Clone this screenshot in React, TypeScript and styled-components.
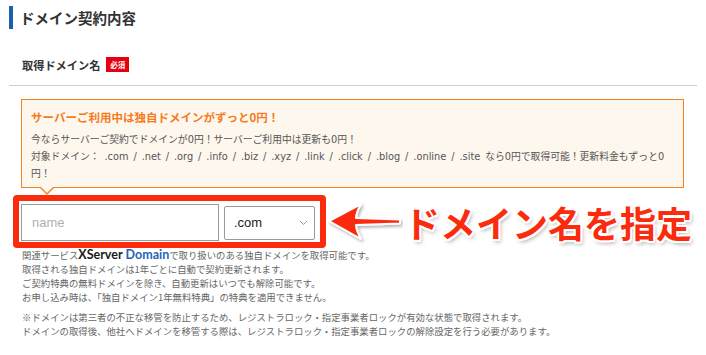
import React from 'react'
import styled, { createGlobalStyle } from 'styled-components'

const GlobalStyle = createGlobalStyle`
  html, body {
    margin: 0;
    padding: 0;
    background: #fff;
  }
  body {
    font-family: "Noto Sans CJK JP", "Noto Sans", sans-serif;
    color: #333;
  }
`

const Page = styled.div`
  width: 706px;
  height: 355px;
  overflow: hidden;
  padding-top: 6px;
  box-sizing: border-box;
`

const Title = styled.h2`
  margin: 0 0 0 9px;
  height: 23px;
  line-height: 23px;
  border-left: 4px solid #1c5fad;
  padding-left: 7px;
  font-size: 14.5px;
  font-weight: 700;
  color: #333;
`

const FieldSection = styled.div`
  margin: 28px 9px 0;
  padding: 0 0 13px 13px;
  border-bottom: 1px solid #cfcfcf;
`

const LabelRow = styled.div`
  display: flex;
  align-items: center;
  gap: 6px;
  height: 15px;
`

const Label = styled.span`
  font-size: 11.2px;
  font-weight: 700;
  color: #333;
`

const RequiredBadge = styled.span`
  display: inline-flex;
  align-items: center;
  justify-content: center;
  width: 23px;
  height: 15px;
  background: #e40012;
  color: #fff;
  font-size: 7.5px;
  font-weight: 700;
`

const Notice = styled.div`
  position: relative;
  margin: 13px 0 0 21px;
  width: 663px;
  box-sizing: border-box;
  border: 1px solid #f5821f;
  background: #fef7ee;
  padding: 9px 9px 5px;

  &::before,
  &::after {
    content: '';
    position: absolute;
    left: 18px;
    width: 0;
    height: 0;
    border-left: 7px solid transparent;
    border-right: 7px solid transparent;
  }
  &::before {
    bottom: -8px;
    border-top: 7px solid #f5821f;
  }
  &::after {
    bottom: -6px;
    border-top: 7px solid #fef7ee;
  }
`

const NoticeHeading = styled.div`
  font-size: 11.5px;
  line-height: 16px;
  font-weight: 700;
  color: #f47b20;
`

const NoticeBody = styled.p`
  margin: 6px 0 0;
  font-family: "DejaVu Sans", "Noto Sans CJK JP", sans-serif;
  font-size: 9.8px;
  line-height: 17px;
  word-spacing: 1.8px;
  color: #555;
`

const InputRow = styled.div`
  display: flex;
  align-items: center;
  margin: 7px 0 0 13px;
`

const HighlightFrame = styled.div`
  display: flex;
  align-items: center;
  gap: 5px;
  width: 313px;
  height: 53px;
  box-sizing: border-box;
  border: 6px solid #fb2b0d;
  border-radius: 4px;
  padding: 2px 5px 0 2px;
`

const NameInput = styled.input`
  width: 198px;
  height: 37px;
  box-sizing: border-box;
  border: 1px solid #9a9a9a;
  padding: 0 10px;
  font-family: "Liberation Sans", Arial, sans-serif;
  font-size: 13px;
  color: #333;
  outline: none;

  &::placeholder {
    color: #b0b0b0;
  }
`

const SelectBox = styled.div`
  display: flex;
  align-items: center;
  justify-content: space-between;
  width: 91px;
  height: 34px;
  box-sizing: border-box;
  border: 1px solid #9a9a9a;
  border-radius: 2px;
  padding: 0 6px 0 9px;
  font-family: "Liberation Sans", Arial, sans-serif;
  font-size: 13px;
  color: #222;
`

const Arrow = styled.svg`
  display: block;
  margin-left: 1px;
  flex-shrink: 0;
`

const Callout = styled.div`
  margin-left: 1px;
  font-size: 36px;
  line-height: 40px;
  font-weight: 700;
  color: #fb2b0d;
  white-space: nowrap;
  text-shadow:
    -1.5px -1.5px 0 #fff, 1.5px -1.5px 0 #fff, -1.5px 1.5px 0 #fff, 1.5px 1.5px 0 #fff,
    0 -2px 0 #fff, 0 2px 0 #fff, -2px 0 0 #fff, 2px 0 0 #fff,
    2px 3px 4px rgba(0, 0, 0, 0.35);
`

const Notes = styled.div`
  padding-left: 22px;
  font-size: 9.4px;
  line-height: 14px;
  color: #666;
`

const NoteBlock = styled.p<{ $gap?: number }>`
  margin: ${p => p.$gap || 0}px 0 0;
`

const BrandX = styled.span`
  font-family: Lato, "Noto Sans", sans-serif;
  font-size: 12.5px;
  font-weight: 700;
  color: #1a1a1a;
`

const BrandDomain = styled(BrandX)`
  color: #2365b4;
  margin-left: 3px;
`

export default function App() {
  return (
    <Page>
      <GlobalStyle />
      <Title>ドメイン契約内容</Title>

      <FieldSection>
        <LabelRow>
          <Label>取得ドメイン名</Label>
          <RequiredBadge>必須</RequiredBadge>
        </LabelRow>
      </FieldSection>

      <Notice>
        <NoticeHeading>サーバーご利用中は独自ドメインがずっと0円！</NoticeHeading>
        <NoticeBody>
          今ならサーバーご契約でドメインが0円！サーバーご利用中は更新も0円！
          <br />
          対象ドメイン： .com / .net / .org / .info / .biz / .xyz / .link / .click / .blog / .online / .site なら0円で取得可能！更新料金もずっと0
          <br />
          円！
        </NoticeBody>
      </Notice>

      <InputRow>
        <HighlightFrame>
          <NameInput placeholder="name" />
          <SelectBox>
            <span>.com</span>
            <svg width="9" height="6" viewBox="0 0 9 6">
              <path d="M1 1 L4.5 4.5 L8 1" fill="none" stroke="#999" strokeWidth="1" />
            </svg>
          </SelectBox>
        </HighlightFrame>

        <Arrow width="76" height="44" viewBox="0 0 76 44">
          <defs>
            <filter id="arrowShadow" x="-20%" y="-30%" width="140%" height="160%">
              <feDropShadow dx="1.5" dy="2" stdDeviation="1.5" floodColor="#000" floodOpacity="0.3" />
            </filter>
          </defs>
          <path
            d="M2 21 L34 4 Q29 13 29 18 L73 19.5 L73 23.5 L29 25 Q29 30 34 39 Z"
            fill="#fb2b0d"
            stroke="#fff"
            strokeWidth="2"
            strokeLinejoin="round"
            filter="url(#arrowShadow)"
          />
        </Arrow>

        <Callout>ドメイン名を指定</Callout>
      </InputRow>

      <Notes>
        <NoteBlock>
          関連サービス<BrandX>XServer</BrandX>
          <BrandDomain>Domain</BrandDomain>で取り扱いのある独自ドメインを取得可能です。
          <br />
          取得される独自ドメインは1年ごとに自動で契約更新されます。
          <br />
          ご契約特典の無料ドメインを除き、自動更新はいつでも解除可能です。
          <br />
          お申し込み時は、「独自ドメイン1年無料特典」の特典を適用できません。
        </NoteBlock>
        <NoteBlock $gap={6}>
          ※ドメインは第三者の不正な移管を防止するため、レジストラロック・指定事業者ロックが有効な状態で取得されます。
          <br />
          ドメインの取得後、他社へドメインを移管する際は、レジストラロック・指定事業者ロックの解除設定を行う必要があります。
        </NoteBlock>
      </Notes>
    </Page>
  )
}
